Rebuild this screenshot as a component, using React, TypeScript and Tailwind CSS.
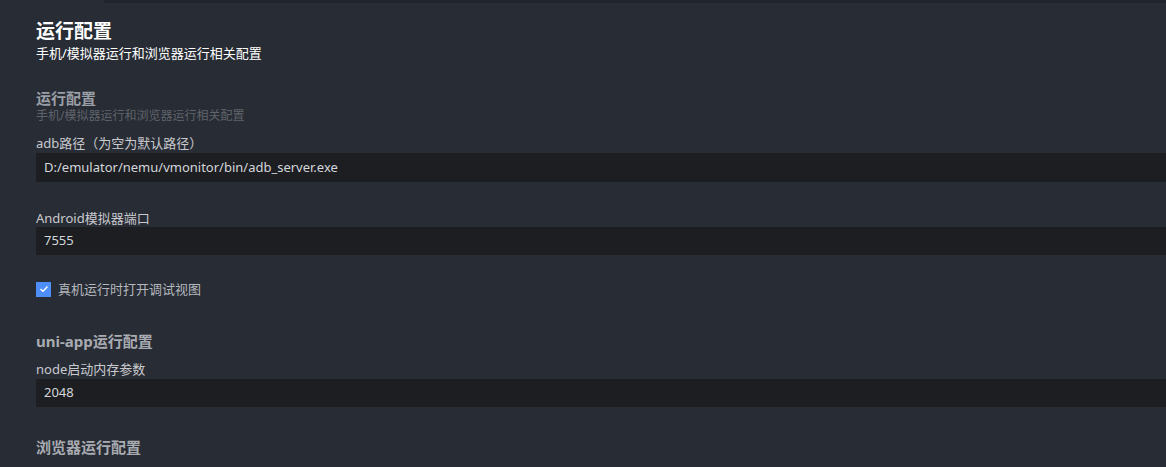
export default function App() {
  const font = { fontFamily: '"Noto Sans", "Noto Sans CJK SC", sans-serif' };
  return (
    <div className="w-[1166px] h-[467px] overflow-hidden bg-[#282c34]" style={font}>
      <div className="ml-[104px] h-[3px] bg-[#21242b]" />
      <div className="pl-[36px]">
        {/* Page header */}
        <h1 className="mt-[16px] text-[19px] leading-[25px] font-bold text-white">运行配置</h1>
        <p className="text-[13px] leading-[18px] text-white">手机/模拟器运行和浏览器运行相关配置</p>

        {/* 运行配置 */}
        <h2 className="mt-[26px] text-[15px] leading-[20px] font-bold text-[#9a9ea6]">运行配置</h2>
        <p className="text-[12px] leading-[16px] text-[#5f636b]">手机/模拟器运行和浏览器运行相关配置</p>

        <label className="block mt-[10px] text-[13px] leading-[18px] text-[#c8cacf]">adb路径（为空为默认路径）</label>
        <div className="mt-[1px] h-[29px] bg-[#1d1e22] pl-[8px] flex items-center text-[13px] text-[#d4d6da]">
          D:/emulator/nemu/vmonitor/bin/adb_server.exe
        </div>

        <label className="block mt-[27px] text-[13px] leading-[18px] text-[#c8cacf]">Android模拟器端口</label>
        <div className="h-[28px] bg-[#1d1e22] pl-[8px] flex items-center text-[13px] text-[#d4d6da]">
          7555
        </div>

        <div className="mt-[25px] flex items-center gap-[7px]">
          <span className="w-[15px] h-[15px] bg-[#4e8ff7] flex items-center justify-center">
            <svg width="10" height="8" viewBox="0 0 10 8" fill="none">
              <path d="M1.5 4 L4 6.2 L8.5 1.5" stroke="white" strokeWidth="1.4" />
            </svg>
          </span>
          <span className="text-[13px] leading-[18px] text-[#b4b7bd]">真机运行时打开调试视图</span>
        </div>

        <h2 className="mt-[33px] text-[15px] leading-[20px] font-bold text-[#a8abb1]">uni-app运行配置</h2>
        <label className="block mt-[9px] text-[13px] leading-[18px] text-[#c8cacf]">node启动内存参数</label>
        <div className="mt-[1px] h-[28px] bg-[#1d1e22] pl-[8px] flex items-center text-[13px] text-[#d4d6da]">
          2048
        </div>

        <h2 className="mt-[30px] text-[15px] leading-[20px] font-bold text-[#a8abb1]">浏览器运行配置</h2>
      </div>
    </div>
  );
}
